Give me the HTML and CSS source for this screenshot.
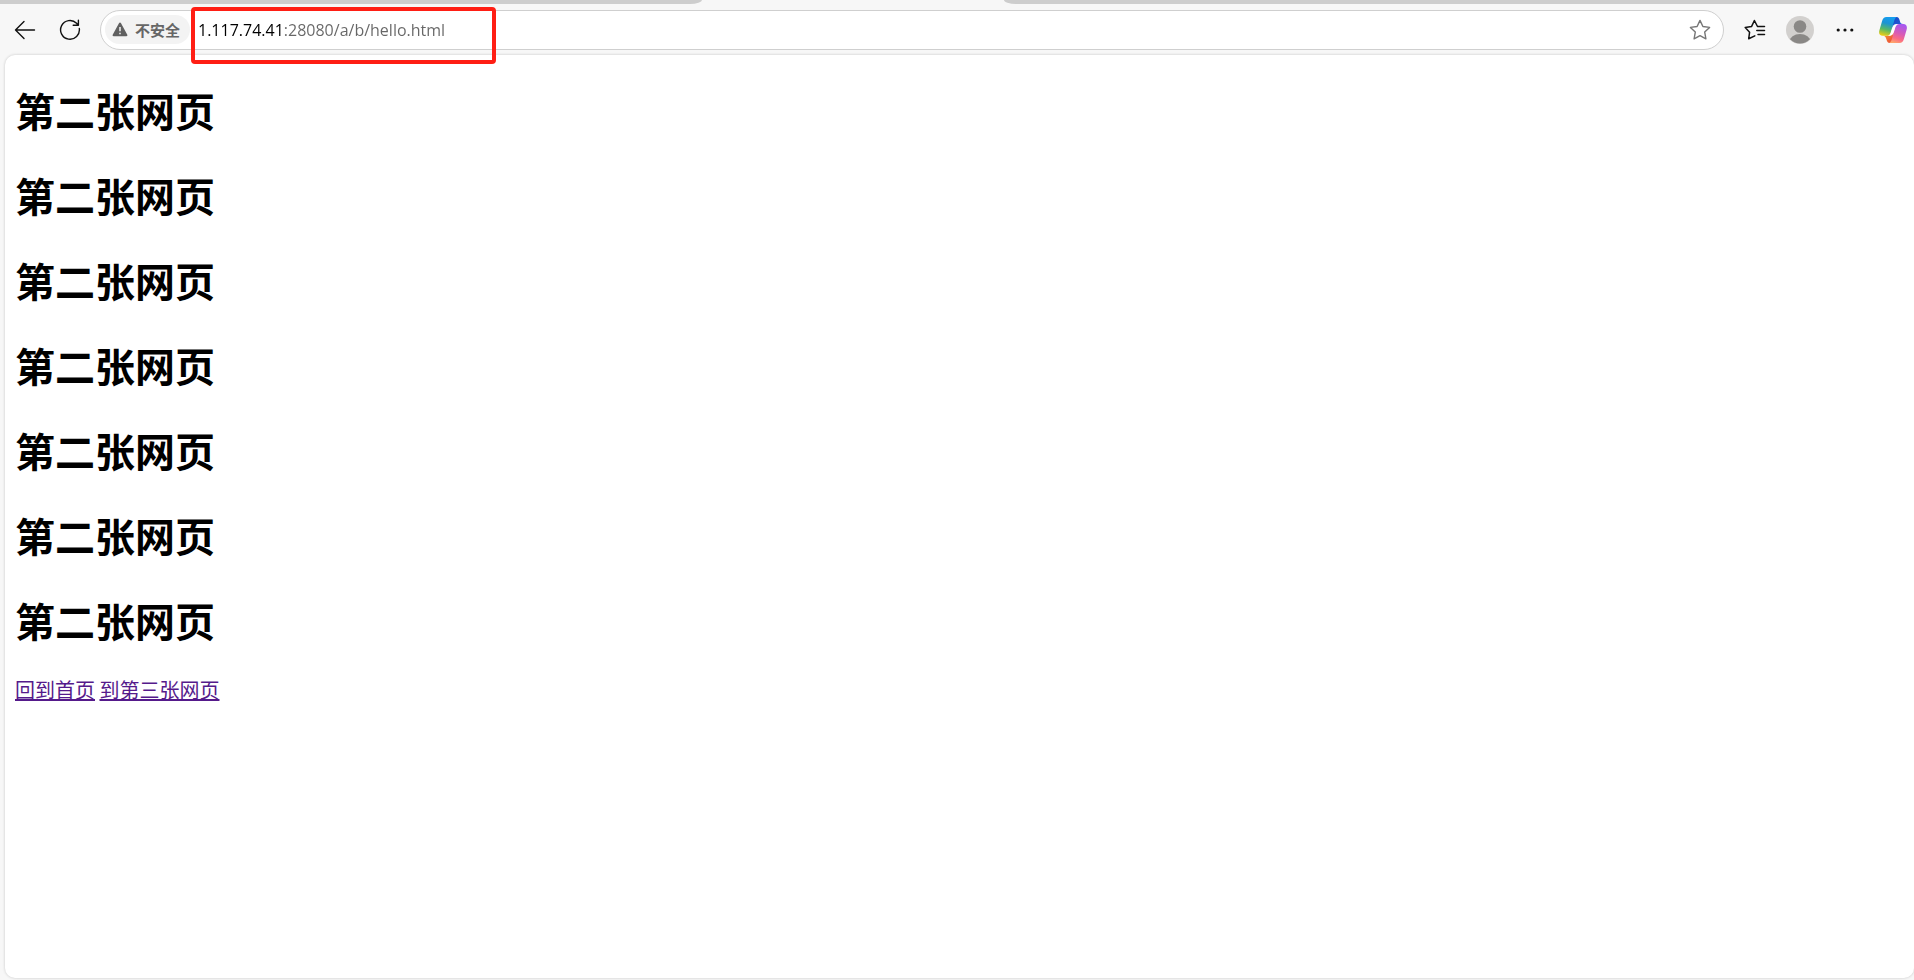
FILE: index.html
```html
<!DOCTYPE html>
<html lang="zh-CN">
<head>
  <meta charset="UTF-8"/>
  <meta name="viewport" content="width=device-width,initial-scale=1.0"/>
  <title>第二张网页</title>
  <link rel="stylesheet" href="styles.css">
</head>
<body>

  <div class="tab-strip">
    <div class="tabs-left"></div>
    <div class="tab-active"></div>
    <div class="tabs-right"></div>
  </div>

  <div class="toolbar">
    <button class="icon-btn" aria-label="后退">
      <svg width="22" height="22" viewBox="0 0 22 22" fill="none" stroke="#111" stroke-width="1.4" stroke-linecap="round" stroke-linejoin="round">
        <path d="M20.5 11H1.5M10 2.5L1.5 11L10 19.5"/>
      </svg>
    </button>
    <button class="icon-btn" aria-label="刷新">
      <svg width="22" height="22" viewBox="0 0 22 22" fill="none" stroke="#111" stroke-width="1.4" stroke-linecap="round" stroke-linejoin="round">
        <path d="M20.3 9.5A9.4 9.4 0 1 1 17.6 4.2L19.3 6.2M19.4 1.2V6.3H14.2"/>
      </svg>
    </button>

    <form class="address-bar">
      <button type="button" class="security">
        <svg width="16" height="15" viewBox="0 0 16 15">
          <path d="M7.1 1.1a1 1 0 0 1 1.8 0l6.4 11.6a1 1 0 0 1-.9 1.5H1.6a1 1 0 0 1-.9-1.5z" fill="#606060"/>
          <path d="M8 5v4.2M8 10.8v1.4" stroke="#f3f3f3" stroke-width="1.5"/>
        </svg>
        <span>不安全</span>
      </button>
      <input type="text" class="url" aria-label="地址" value="1.117.74.41:28080/a/b/hello.html">
      <button type="button" class="star" aria-label="收藏">
        <svg width="22" height="22" viewBox="0 0 22 22" fill="none" stroke="#767676" stroke-width="1.4" stroke-linejoin="round">
          <path d="M11 1.4L13.9 7.5L20.6 8.4L15.7 13.1L16.9 19.8L11 16.6L5.1 19.8L6.3 13.1L1.4 8.4L8.1 7.5Z"/>
        </svg>
      </button>
      <div class="highlight"></div>
    </form>

    <button class="icon-btn" aria-label="收藏夹">
      <svg width="22" height="22" viewBox="0 0 22 22" fill="none" stroke="#111" stroke-width="1.5" stroke-linecap="round" stroke-linejoin="round">
        <path d="M13.5 7.5L10.4 1.5L7.5 7.6L1.2 8.6L5.6 13.2L4.7 19.8L10.8 16.9M13.5 7.5H20.5M12.8 11.5H20.5M14 15.5H20.5"/>
      </svg>
    </button>
    <button class="icon-btn" aria-label="个人资料">
      <svg width="28" height="28" viewBox="0 0 28 28">
        <defs><clipPath id="avatar"><circle cx="14" cy="14" r="13.6"/></clipPath></defs>
        <circle cx="14" cy="14" r="14" fill="#d2d0ce"/>
        <g clip-path="url(#avatar)" fill="#8a8886">
          <circle cx="14" cy="10.5" r="6.3"/>
          <ellipse cx="14" cy="25.5" rx="10.5" ry="7.6"/>
        </g>
      </svg>
    </button>
    <button class="icon-btn" aria-label="设置及其他">
      <svg width="18" height="18" viewBox="0 0 18 18" fill="#111">
        <circle cx="2.2" cy="9" r="1.6"/><circle cx="9" cy="9" r="1.6"/><circle cx="15.8" cy="9" r="1.6"/>
      </svg>
    </button>
    <button class="icon-btn copilot" aria-label="Copilot">
      <svg width="28" height="26" viewBox="0 0 28 26">
        <defs>
          <linearGradient id="cpLeft" x1=".6" y1="0" x2=".35" y2="1">
            <stop offset="0" stop-color="#159df0"/><stop offset=".35" stop-color="#1c94d4"/>
            <stop offset=".68" stop-color="#58b965"/><stop offset="1" stop-color="#e8cc16"/>
          </linearGradient>
          <linearGradient id="cpRight" x1=".6" y1="0" x2=".3" y2="1">
            <stop offset="0" stop-color="#a658f0"/><stop offset=".45" stop-color="#d65bb8"/>
            <stop offset=".75" stop-color="#fa6a86"/><stop offset="1" stop-color="#ffa66b"/>
          </linearGradient>
          <linearGradient id="cpTop" x1="0" y1="0" x2="1" y2="1">
            <stop offset="0" stop-color="#1548c4"/><stop offset="1" stop-color="#2a62dc"/>
          </linearGradient>
          <linearGradient id="cpBottom" x1="0" y1="0" x2="1" y2="1">
            <stop offset="0" stop-color="#f9a02c"/><stop offset="1" stop-color="#e8433c"/>
          </linearGradient>
        </defs>
        <path d="M14 0H17.5C19.5 0 20.2 1.4 20.8 3.8C21.3 6 22 7 24 7H17.5C15 7 14 8.5 13.2 11Z" fill="url(#cpTop)"/>
        <path d="M14 26H10.8C8.7 26 8 24.6 7.4 22.2C6.8 20 6 18.8 4 18.8H10.5C13 18.8 14 17.5 14.8 15Z" fill="url(#cpBottom)"/>
        <path d="M7.5 0H18C16.5.3 15.7 2 15 4.4L11.7 15.4C11 17.8 9.8 18.8 7.4 18.8H3.8C.5 18.8-.5 16.4.4 13.2L3.1 3.9C3.9 1.3 5.1 0 7.5 0Z" fill="url(#cpLeft)"/>
        <path d="M20.5 26H10C11.5 25.7 12.3 24 13 21.6L16.3 10.6C17 8.2 18.2 7 20.6 7H24.2C27.5 7 28.5 9.6 27.6 12.8L24.9 22.1C24.1 24.7 22.9 26 20.5 26Z" fill="url(#cpRight)"/>
        <path d="M18.8 7.4C16.2 7.2 14.2 8.4 13.4 11L11.9 15.8C11.4 17.4 10.6 18.5 9.2 18.7C11.8 18.9 13.8 17.6 14.6 15L16.1 10.2C16.6 8.7 17.4 7.7 18.8 7.4Z" fill="#fff"/>
      </svg>
    </button>
  </div>

  <main class="page">
    <h1>第二张网页</h1>
    <h1>第二张网页</h1>
    <h1>第二张网页</h1>
    <h1>第二张网页</h1>
    <h1>第二张网页</h1>
    <h1>第二张网页</h1>
    <h1>第二张网页</h1>
    <a href="#">回到首页</a>
    <a href="#">到第三张网页</a>
  </main>

</body>
</html>
```
FILE: styles.css
```css
* {
  box-sizing: border-box;
}

body {
  margin: 0;
  height: 100vh;
  display: flex;
  flex-direction: column;
  background: #f7f7f7;
  font-family: "Open Sans", "Noto Sans CJK SC", sans-serif;
  overflow: hidden;
}

button {
  padding: 0;
  border: none;
  background: none;
  font-family: inherit;
  cursor: pointer;
}

svg {
  display: block;
}

/* TABS */
.tab-strip {
  display: flex;
  height: 4px;
}

.tabs-left {
  flex: 702;
  background: #cdcdcd;
  border-bottom-right-radius: 12px 4px;
}

.tab-active {
  flex: 302;
}

.tabs-right {
  flex: 910;
  background: #cdcdcd;
  border-bottom-left-radius: 12px 4px;
}

/* TOOLBAR */
.toolbar {
  display: flex;
  align-items: center;
  height: 51px;
  padding-left: 2px;
}

.icon-btn {
  width: 45px;
  height: 40px;
  flex-shrink: 0;
  display: flex;
  align-items: center;
  justify-content: center;
}

.copilot {
  width: 43px;
  margin-left: 4px;
}

.address-bar {
  position: relative;
  flex: 1;
  display: flex;
  align-items: center;
  height: 40px;
  margin: 0 8px;
  padding: 0 12px 0 4px;
  background: #fff;
  border: 1px solid #cfcfcf;
  border-radius: 20px;
}

.security {
  display: flex;
  align-items: center;
  gap: 7px;
  height: 29px;
  padding: 0 10px 0 7px;
  border-radius: 15px;
  background: #f3f3f3;
  color: #666;
  font-size: 15px;
  font-weight: 600;
  white-space: nowrap;
}

/* host is black, port and path are grey */
.url {
  flex: 1;
  min-width: 0;
  height: 30px;
  margin-left: 8px;
  padding: 0;
  border: none;
  outline: none;
  background: linear-gradient(90deg, #000 86px, #666 86px);
  background-clip: text;
  -webkit-background-clip: text;
  color: transparent;
  font-family: inherit;
  font-size: 16px;
}

.highlight {
  position: absolute;
  top: -4px;
  left: 90px;
  width: 305px;
  height: 57px;
  border: 4px solid #ff1e14;
  border-radius: 4px;
  pointer-events: none;
}

/* PAGE */
.page {
  flex: 1;
  margin: 0 0 2px 5px;
  padding: 0 10px;
  background: #fff;
  border-radius: 10px;
  box-shadow: 0 0 3px rgba(0, 0, 0, 0.2);
  font-family: "Noto Sans CJK SC", sans-serif;
  font-size: 20px;
  line-height: 28px;
}

.page h1 {
  margin: 26px 0;
  font-size: 40px;
  line-height: 59px;
}

.page a {
  color: #551a8b;
}
```
